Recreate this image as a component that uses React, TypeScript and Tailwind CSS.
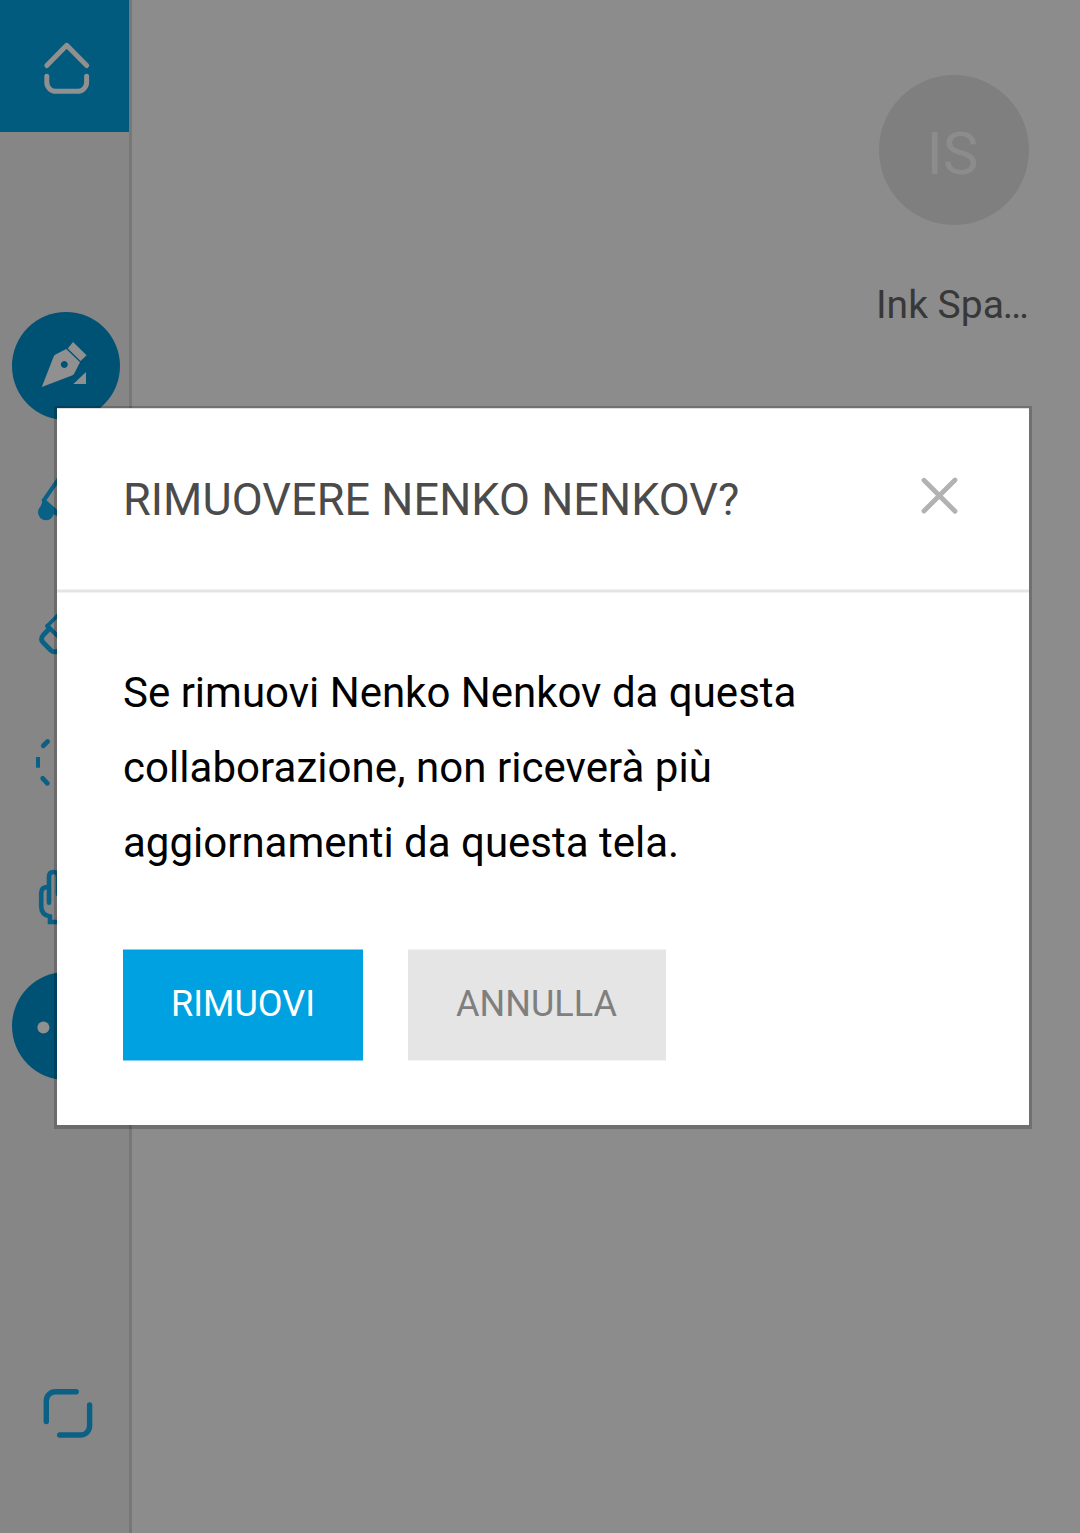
import type { ReactNode } from 'react';

function Cell({ children }: { children: ReactNode }) {
  return (
    <button className="block h-[132px] w-[129px] shrink-0">
      <svg width="129" height="132" viewBox="0 0 129 132" fill="none" strokeLinecap="round" strokeLinejoin="round">
        {children}
      </svg>
    </button>
  );
}

function Sidebar() {
  return (
    <nav className="flex h-full w-[132px] shrink-0 flex-col border-r-[3px] border-[#777777] bg-[#868686]">
      <div className="bg-[#005b7f]">
        <Cell>
          <g stroke="#909090" strokeWidth="5">
            <path d="M46.8 65.5 66.7 45.3 86.7 65.5" />
            <path d="M46.8 76.3V82.3A9 9 0 0 0 55.8 91.3H77.6A9 9 0 0 0 86.6 82.3V76.3" />
          </g>
        </Cell>
      </div>
      <div className="mt-[168px] flex flex-col">
        <Cell>
          <circle cx="66" cy="66" r="54" fill="#005275" />
          <g fill="#909090">
            <path fillRule="evenodd" d="M41.8 87 53.5 57Q54 55.5 55.5 54.6L66.2 49 80 62.2 74.5 73Q73.8 74.7 72 75.6Z M64.3 61.1a3.5 3.5 0 1 0 .01 0Z" />
            <path d="M73 42 86.6 55.3 80.6 61 67.8 48.4Z" />
            <path d="M86 72V84H73.3Z" />
          </g>
        </Cell>
        <Cell>
          <circle cx="46" cy="80.3" r="8" fill="#0a6185" />
          <path d="M60 45 43.7 68.5 60 83" stroke="#0a6185" strokeWidth="4" />
          <path d="M43 68 57 79V84L53 82 40 76Z" fill="#0a6185" />
        </Cell>
        <Cell>
          <g stroke="#0a6185" strokeWidth="4.8">
            <path d="M60 49 47.3 62" strokeWidth="3.8" />
            <path d="M47.3 62 62 76" strokeWidth="4.4" />
            <path d="M49.5 64.5 43.3 71Q39.8 75 43.3 78.7L50.5 86Q54.5 89.8 60 86" />
          </g>
        </Cell>
        <Cell>
          <g stroke="#0a6185" strokeWidth="4.8">
            <path d="M43.3 49.8 47.6 45.5" />
            <path d="M38 61V71.7" strokeWidth="4" strokeLinecap="butt" />
            <path d="M42.7 82.3 47.4 87.3" />
          </g>
        </Cell>
        <Cell>
          <g stroke="#0a6185" strokeWidth="4.6">
            <path d="M49 74.7V49Q49 44 53.5 44T58 49V66" />
            <path d="M48 59Q41.2 59 41.2 65V78Q41.2 87 50 88.5V94H60" strokeLinejoin="miter" strokeLinecap="butt" />
          </g>
        </Cell>
        <Cell>
          <circle cx="66" cy="66" r="54" fill="#005275" />
          <circle cx="43.4" cy="67.4" r="6" fill="#909090" />
        </Cell>
      </div>
      <div className="mt-auto mb-[54px]">
        <Cell>
          <g stroke="#0a6185" strokeWidth="5.4">
            <path d="M46.3 74.6V53.7A9 9 0 0 1 55.3 44.7H76.2" />
            <path d="M89.6 58V79A9 9 0 0 1 80.6 88H59.7" />
          </g>
        </Cell>
      </div>
    </nav>
  );
}

function Dialog() {
  return (
    <section
      role="dialog"
      className="absolute left-[57px] top-[408px] flex h-[717px] w-[972px] flex-col border-t border-[#dedede] bg-white shadow-[0_1px_0_3px_rgba(0,0,0,0.2)]"
    >
      <header className="flex h-[180px] items-center justify-between pl-[66px] pr-[68px]">
        <h1 className="pt-[2px] text-[45px] leading-[60px] tracking-[0.07px] text-[#4b4b4b]">RIMUOVERE NENKO NENKOV?</h1>
        <button aria-label="Chiudi" className="-mt-[6px]">
          <svg width="42" height="42" viewBox="0 0 42 42" stroke="#b2b2b2" strokeWidth="4.8" strokeLinecap="round">
            <path d="M5 5.2 36 36.3M36 5 5 36" />
          </svg>
        </button>
      </header>
      <div className="h-1 shrink-0 border-y border-[#f2f2f2] bg-[#e4e4e4]" />
      <div className="flex flex-col px-[66px] pt-[62px]">
        <p className="text-[42px] leading-[75px] text-black">
          Se rimuovi Nenko Nenkov da questa
          <br />
          <span className="tracking-[0.05px]">collaborazione, non riceverà più</span>
          <br />
          aggiornamenti da questa tela.
        </p>
        <div className="mt-[69px] flex gap-[45px]">
          <button className="h-[112px] w-[240px] border-y border-[#80d0f0] bg-[#00a1e1] pb-[2px] text-[36px] text-white">RIMUOVI</button>
          <button className="h-[112px] w-[258px] border-y border-[#f2f2f2] bg-[#e5e5e5] pb-[2px] pr-[1px] text-[36px] text-[#7f7f7f]">ANNULLA</button>
        </div>
      </div>
    </section>
  );
}

export default function App() {
  return (
    <div className="relative flex h-[1533px] w-[1080px] overflow-hidden bg-[#8c8c8c] font-['Roboto',sans-serif]">
      <Sidebar />
      <main className="flex flex-1 justify-end pr-[51px] pt-[75px]">
        <div className="flex w-[153px] flex-col items-end">
          <div className="flex size-[150px] items-center justify-center rounded-full bg-[#7f7f7f] pr-[3px] pt-[8px] text-[60px] text-[#8c8c8c]">
            IS
          </div>
          <div className="mt-[50px] w-full whitespace-nowrap text-[39px] leading-[60px] text-[#383838]">
            Ink Spa<span className="-ml-[1px] tracking-[-1px]">…</span>
          </div>
        </div>
      </main>
      <Dialog />
    </div>
  );
}
